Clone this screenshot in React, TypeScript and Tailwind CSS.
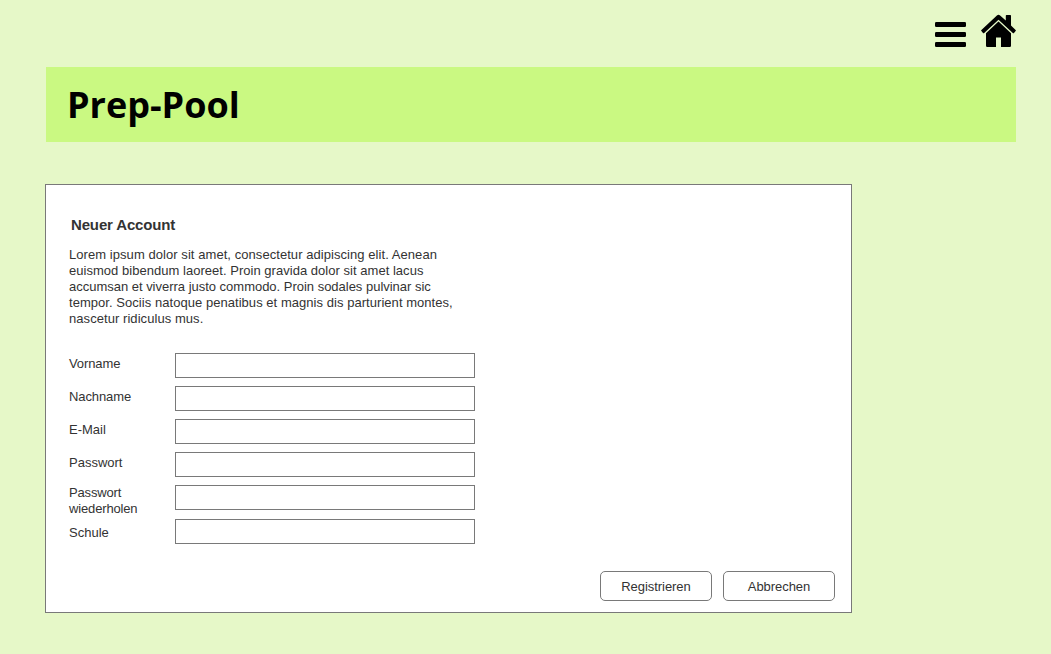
const fields = [
  { label: "Vorname", row: "h-[33px]", text: "pt-[3px] tracking-[-0.1px]" },
  { label: "Nachname", row: "h-[33px]", text: "pt-[3px] tracking-[-0.1px]" },
  { label: "E-Mail", row: "h-[33px]", text: "pt-[3px]" },
  { label: "Passwort", row: "h-[33px]", text: "pt-[3px]" },
  { label: "Passwort wiederholen", row: "h-[34px]", text: "tracking-[-0.15px]" },
  { label: "Schule", row: "h-[25px]", text: "pt-[6px]" },
];

const intro = [
  { text: "Lorem ipsum dolor sit amet, consectetur adipiscing elit. Aenean", tracking: "tracking-[0.06px]" },
  { text: "euismod bibendum laoreet. Proin gravida dolor sit amet lacus", tracking: "tracking-[0.03px]" },
  { text: "accumsan et viverra justo commodo. Proin sodales pulvinar sic", tracking: "tracking-[-0.015px]" },
  { text: "tempor. Sociis natoque penatibus et magnis dis parturient montes,", tracking: "tracking-[0.045px]" },
  { text: "nascetur ridiculus mus.", tracking: "tracking-[0.06px]" },
];

function MenuIcon() {
  return (
    <svg viewBox="0 0 31 25" className="h-[25px] w-[31px]" fill="currentColor">
      <rect width="31" height="5" rx="1.3" />
      <rect y="10" width="31" height="5" rx="1.3" />
      <rect y="20" width="31" height="5" rx="1.3" />
    </svg>
  );
}

function HomeIcon() {
  return (
    <svg viewBox="0 0 35 33" className="h-[33px] w-[35px]" fill="currentColor">
      <path d="M17.5 7.6 30 19.3V31.8Q30 33 28.8 33H20V23.5H15V33H6.2Q5 33 5 31.8V19.3Z" />
      <path d="M15.9 1.4Q17.5.2 19.1 1.4L24.8 6.6V1.7Q24.8 1 25.5 1H29.3Q30 1 30 1.7V11.5L34.6 15.9Q35.2 16.5 34.6 17.1L33 19Q32.4 19.6 31.8 19L17.5 5.8 3.2 19Q2.6 19.6 2 19L.4 17.1Q-.2 16.5.4 15.9Z" />
    </svg>
  );
}

export default function App() {
  return (
    <div className="h-[654px] w-[1051px] overflow-hidden bg-[#e6f8c8] font-['Liberation_Sans',Arial,sans-serif] text-[13px] leading-4 text-[#333]">
      <nav className="flex h-[67px] items-start justify-end gap-[15px] pr-[35px] pt-[14px] text-black">
        <button aria-label="Menü" className="mt-[8px]"><MenuIcon /></button>
        <button aria-label="Startseite"><HomeIcon /></button>
      </nav>
      <header className="ml-[46px] flex h-[75px] w-[970px] items-center bg-[#caf982] pl-[21px]">
        <h1 className="font-['Open_Sans',sans-serif] text-[36px] font-bold leading-[49px] text-black">Prep-Pool</h1>
      </header>
      <main className="ml-[45px] mt-[42px] h-[429px] w-[807px] border border-[#797979] bg-white pl-[23px] pt-[31px]">
        <h2 className="pl-[2px] text-[15px] font-bold leading-[18px] tracking-[-0.15px]">Neuer Account</h2>
        <p className="mt-[13px] w-[390px] whitespace-nowrap">
          {intro.map((line) => (
            <span key={line.text} className={`block ${line.tracking}`}>{line.text}</span>
          ))}
        </p>
        <form className="mt-[26px]">
          {fields.map((f) => (
            <label key={f.label} className={`flex items-start ${f.row}`}>
              <span className={`w-[106px] pr-[20px] ${f.text}`}>{f.label}</span>
              <input className="h-[25px] w-[300px] border border-[#797979] bg-white px-1 outline-none" />
            </label>
          ))}
          <div className="mt-[27px] flex justify-end gap-[11px] pr-[16px]">
            <button type="button" className="h-[30px] w-[112px] rounded-[5px] border border-[#797979] pt-[2px] tracking-[-0.05px]">Registrieren</button>
            <button type="button" className="h-[30px] w-[112px] rounded-[5px] border border-[#797979] pt-[2px] tracking-[-0.05px]">Abbrechen</button>
          </div>
        </form>
      </main>
    </div>
  );
}
